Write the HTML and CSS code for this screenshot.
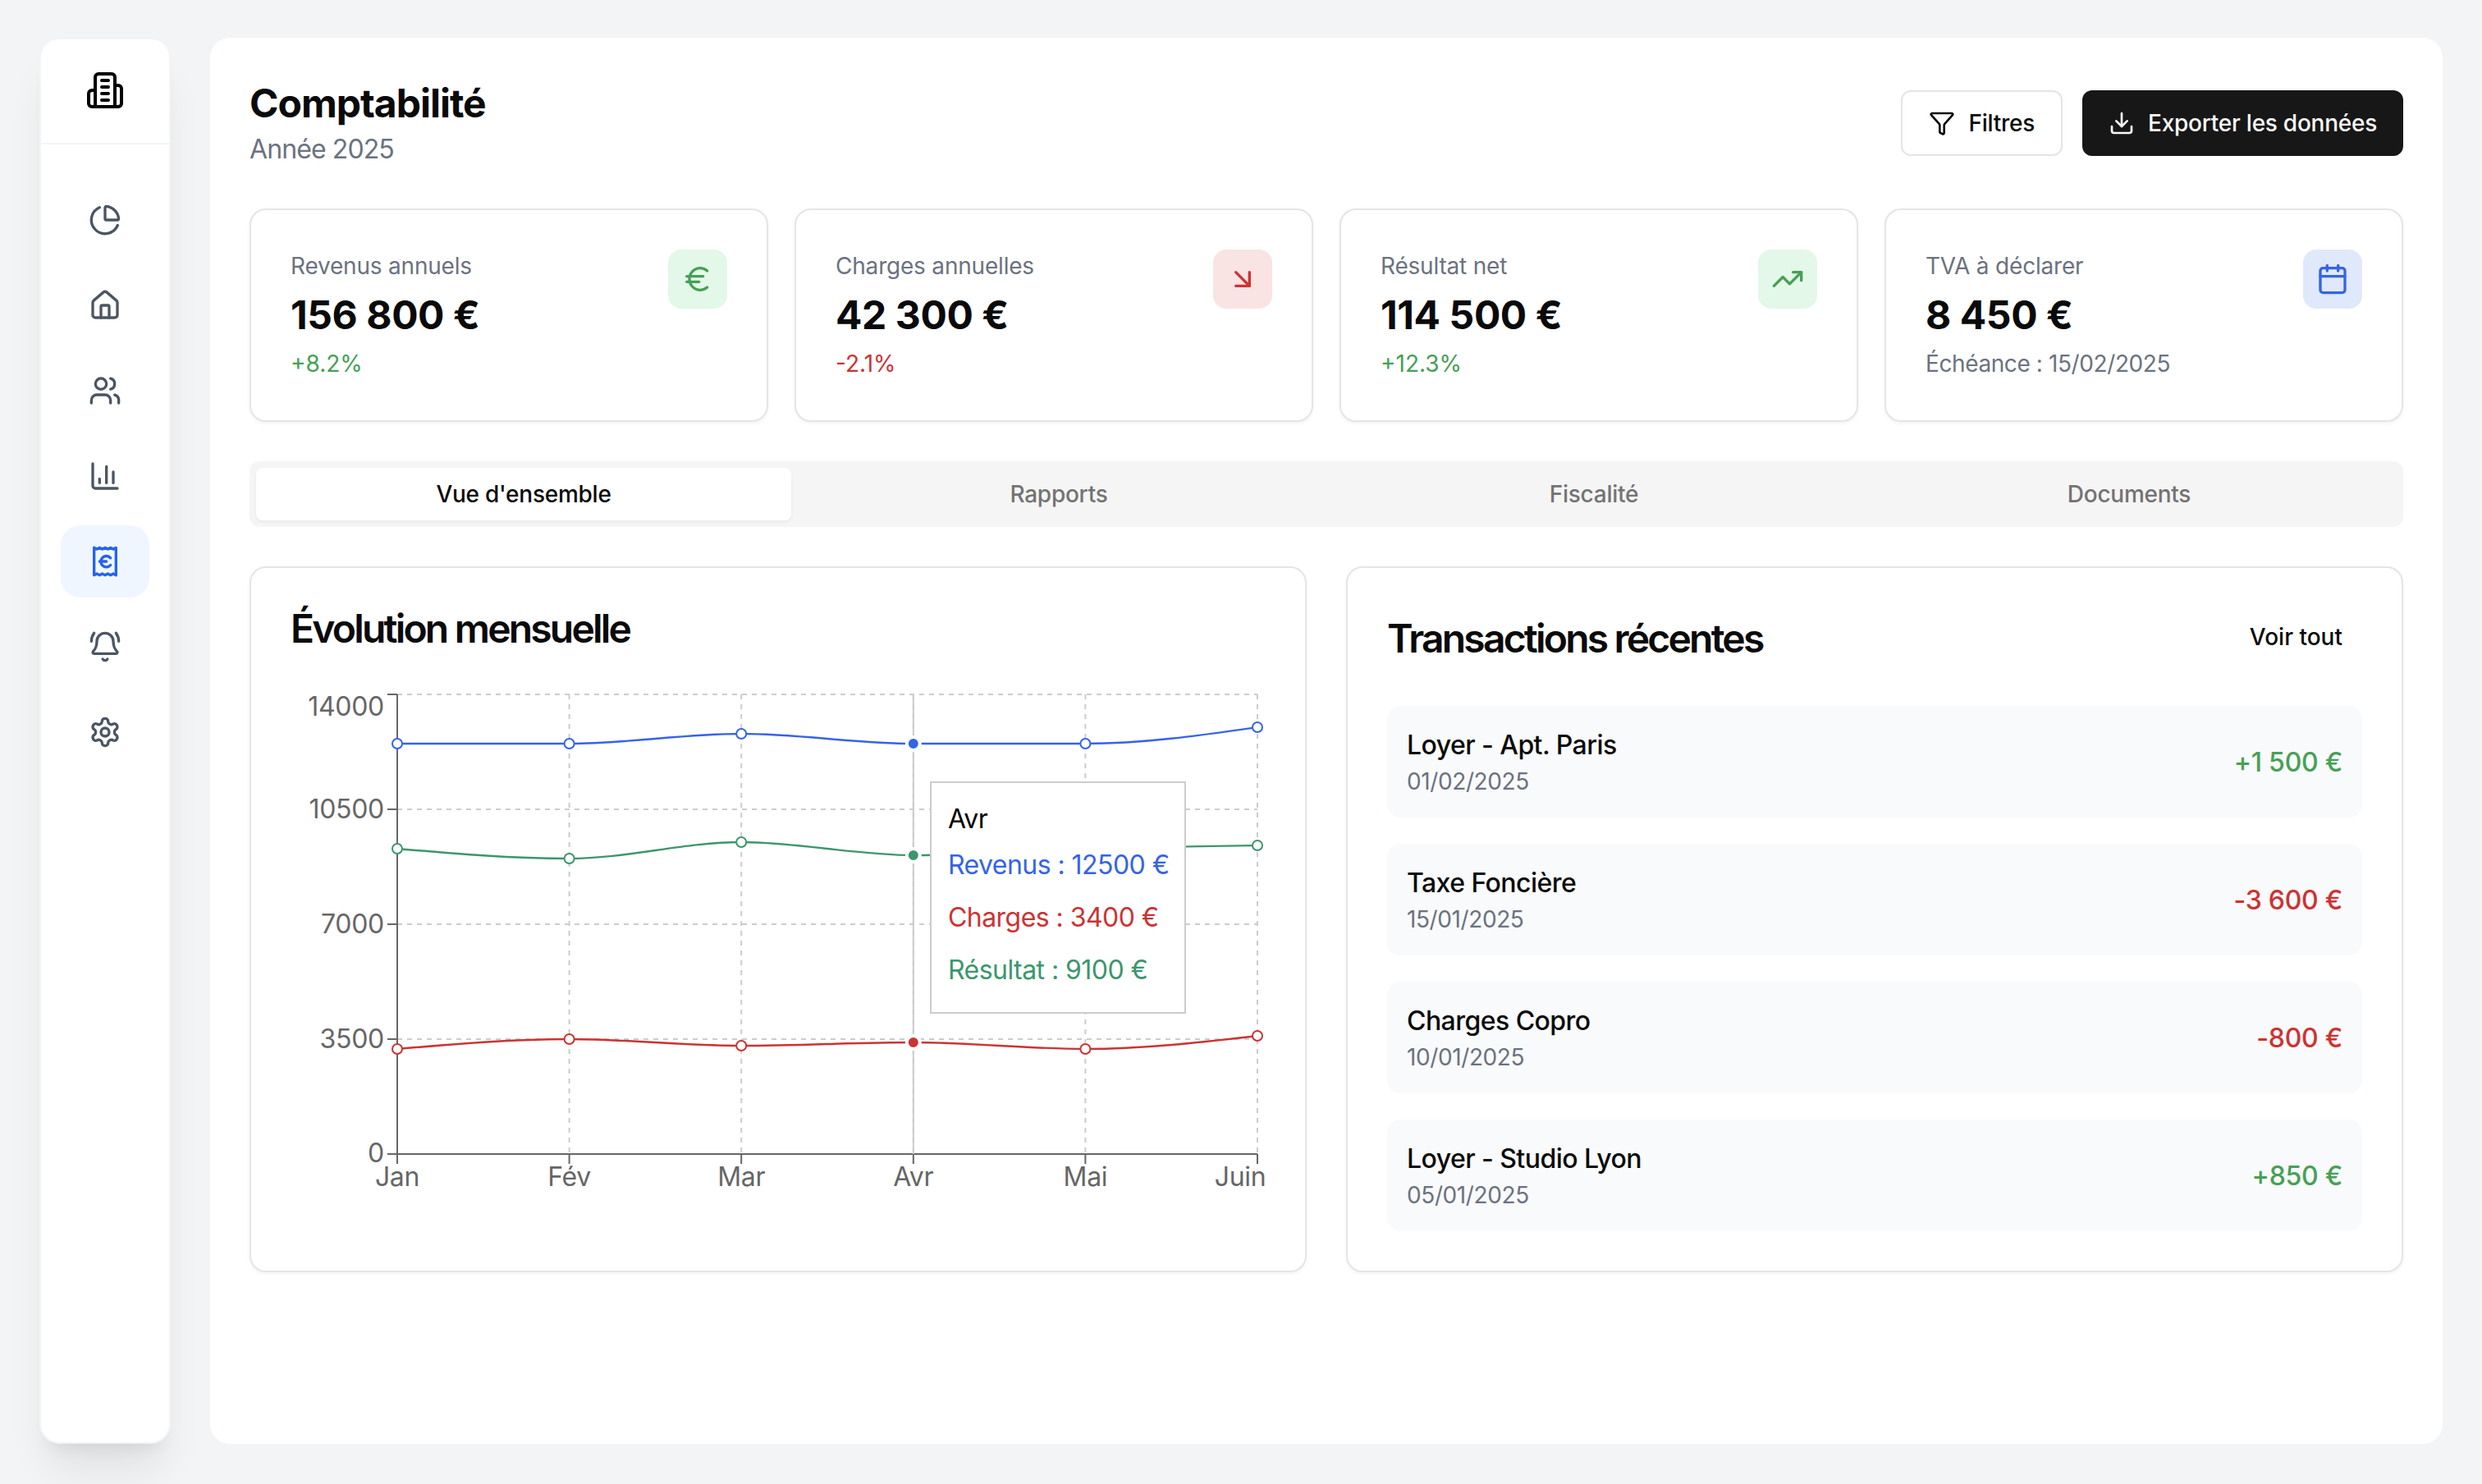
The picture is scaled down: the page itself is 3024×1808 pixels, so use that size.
FILE: index.html
```html
<!DOCTYPE html>
<html lang="fr">
<head>
    <meta charset="utf-8">
    <title>Comptabilité</title>
    <link rel="stylesheet" href="styles.css">
</head>
<body>
<div class="app">
    <!-- sidebar -->
    <aside class="sidebar">
        <div class="sidebar-logo">
            <svg class="icon logo-icon" viewBox="0 0 24 24"><path d="M6 22V4a2 2 0 0 1 2-2h8a2 2 0 0 1 2 2v18Z"/><path d="M6 12H4a2 2 0 0 0-2 2v6a2 2 0 0 0 2 2h2"/><path d="M18 9h2a2 2 0 0 1 2 2v9a2 2 0 0 1-2 2h-2"/><path d="M10 6h4"/><path d="M10 10h4"/><path d="M10 14h4"/><path d="M10 18h4"/></svg>
        </div>
        <nav class="sidebar-nav">
            <a class="nav-item"><svg class="icon" viewBox="0 0 24 24"><path d="M21 12c.552 0 1.005-.449.95-.998a10 10 0 0 0-8.953-8.951c-.55-.055-.998.398-.998.95v8a1 1 0 0 0 1 1z"/><path d="M21.21 15.89A10 10 0 1 1 8 2.83"/></svg></a>
            <a class="nav-item"><svg class="icon" viewBox="0 0 24 24"><path d="M15 21v-8a1 1 0 0 0-1-1h-4a1 1 0 0 0-1 1v8"/><path d="M3 10a2 2 0 0 1 .709-1.528l7-5.999a2 2 0 0 1 2.582 0l7 5.999A2 2 0 0 1 21 10v9a2 2 0 0 1-2 2H5a2 2 0 0 1-2-2z"/></svg></a>
            <a class="nav-item"><svg class="icon" viewBox="0 0 24 24"><path d="M16 21v-2a4 4 0 0 0-4-4H6a4 4 0 0 0-4 4v2"/><circle cx="9" cy="7" r="4"/><path d="M22 21v-2a4 4 0 0 0-3-3.87"/><path d="M16 3.13a4 4 0 0 1 0 7.75"/></svg></a>
            <a class="nav-item"><svg class="icon" viewBox="0 0 24 24"><path d="M3 3v16a2 2 0 0 0 2 2h16"/><path d="M18 17V9"/><path d="M13 17V5"/><path d="M8 17v-3"/></svg></a>
            <a class="nav-item active"><svg class="icon" viewBox="0 0 24 24"><path d="M4 2v20l2-1 2 1 2-1 2 1 2-1 2 1 2-1 2 1V2l-2 1-2-1-2 1-2-1-2 1-2-1-2 1Z"/><path d="M8 12h5"/><path d="M16 9.5a4 4 0 1 0 0 5.2"/></svg></a>
            <a class="nav-item"><svg class="icon" viewBox="0 0 24 24"><path d="M10.268 21a2 2 0 0 0 3.464 0"/><path d="M22 8c0-2.3-.8-4.3-2-6"/><path d="M3.262 15.326A1 1 0 0 0 4 17h16a1 1 0 0 0 .74-1.673C19.41 13.956 18 12.499 18 8A6 6 0 0 0 6 8c0 4.499-1.411 5.956-2.738 7.326"/><path d="M4 2C2.8 3.7 2 5.7 2 8"/></svg></a>
            <a class="nav-item"><svg class="icon" viewBox="0 0 24 24"><path d="M12.22 2h-.44a2 2 0 0 0-2 2v.18a2 2 0 0 1-1 1.73l-.43.25a2 2 0 0 1-2 0l-.15-.08a2 2 0 0 0-2.73.73l-.22.38a2 2 0 0 0 .73 2.73l.15.1a2 2 0 0 1 1 1.72v.51a2 2 0 0 1-1 1.74l-.15.09a2 2 0 0 0-.73 2.73l.22.38a2 2 0 0 0 2.73.73l.15-.08a2 2 0 0 1 2 0l.43.25a2 2 0 0 1 1 1.73V20a2 2 0 0 0 2 2h.44a2 2 0 0 0 2-2v-.18a2 2 0 0 1 1-1.73l.43-.25a2 2 0 0 1 2 0l.15.08a2 2 0 0 0 2.73-.73l.22-.39a2 2 0 0 0-.73-2.73l-.15-.08a2 2 0 0 1-1-1.74v-.5a2 2 0 0 1 1-1.74l.15-.09a2 2 0 0 0 .73-2.73l-.22-.38a2 2 0 0 0-2.73-.73l-.15.08a2 2 0 0 1-2 0l-.43-.25a2 2 0 0 1-1-1.73V4a2 2 0 0 0-2-2z"/><circle cx="12" cy="12" r="3"/></svg></a>
        </nav>
    </aside>

    <main class="main">
        <!-- page header -->
        <header class="page-header">
            <div>
                <h1 class="page-title">Comptabilité</h1>
                <p class="page-sub">Année 2025</p>
            </div>
            <div class="header-actions">
                <button class="btn btn-outline">
                    <svg class="icon btn-icon" viewBox="0 0 24 24"><path d="M10 20a1 1 0 0 0 .553.895l2 1A1 1 0 0 0 14 21v-7a2 2 0 0 1 .517-1.341L21.74 4.67A1 1 0 0 0 21 3H3a1 1 0 0 0-.742 1.67l7.225 7.989A2 2 0 0 1 10 14z"/></svg>
                    Filtres
                </button>
                <button class="btn btn-dark">
                    <svg class="icon btn-icon" viewBox="0 0 24 24"><path d="M12 15V3"/><path d="M21 15v4a2 2 0 0 1-2 2H5a2 2 0 0 1-2-2v-4"/><path d="m7 10 5 5 5-5"/></svg>
                    Exporter les données
                </button>
            </div>
        </header>

        <!-- stat cards -->
        <section class="stats">
            <div class="card stat-card">
                <div>
                    <p class="stat-label">Revenus annuels</p>
                    <p class="stat-value">156 800 €</p>
                    <p class="stat-note up">+8.2%</p>
                </div>
                <div class="stat-icon green"><svg class="icon" viewBox="0 0 24 24"><path d="M4 10h12"/><path d="M4 14h9"/><path d="M19 6a7.7 7.7 0 0 0-5.2-2A7.9 7.9 0 0 0 6 12c0 4.4 3.5 8 7.8 8 2 0 3.8-.8 5.2-2"/></svg></div>
            </div>
            <div class="card stat-card">
                <div>
                    <p class="stat-label">Charges annuelles</p>
                    <p class="stat-value">42 300 €</p>
                    <p class="stat-note down">-2.1%</p>
                </div>
                <div class="stat-icon red"><svg class="icon" viewBox="0 0 24 24"><path d="m7 7 10 10"/><path d="M17 7v10H7"/></svg></div>
            </div>
            <div class="card stat-card">
                <div>
                    <p class="stat-label">Résultat net</p>
                    <p class="stat-value">114 500 €</p>
                    <p class="stat-note up">+12.3%</p>
                </div>
                <div class="stat-icon green"><svg class="icon" viewBox="0 0 24 24"><path d="M16 7h6v6"/><path d="m22 7-8.5 8.5-5-5L2 17"/></svg></div>
            </div>
            <div class="card stat-card">
                <div>
                    <p class="stat-label">TVA à déclarer</p>
                    <p class="stat-value">8 450 €</p>
                    <p class="stat-note">Échéance : 15/02/2025</p>
                </div>
                <div class="stat-icon blue"><svg class="icon" viewBox="0 0 24 24"><path d="M8 2v4"/><path d="M16 2v4"/><rect width="18" height="18" x="3" y="4" rx="2"/><path d="M3 10h18"/></svg></div>
            </div>
        </section>

        <!-- tabs -->
        <div class="tabs">
            <div class="tab active">Vue d'ensemble</div>
            <div class="tab">Rapports</div>
            <div class="tab">Fiscalité</div>
            <div class="tab">Documents</div>
        </div>

        <section class="panels">
            <!-- chart -->
            <div class="card panel">
                <h2 class="panel-title chart-title">Évolution mensuelle</h2>
                <div class="chart">
                    <svg class="chart-svg" viewBox="354 836 1188 664" width="1188" height="664">
                        <g class="grid">
                            <path d="M484 846H1532M484 986H1532M484 1126H1532M484 1266H1532M484 1406H1532"/>
                            <path d="M484 846V1406M693.6 846V1406M903.2 846V1406M1112.8 846V1406M1322.4 846V1406M1532 846V1406"/>
                        </g>
                        <g class="axis">
                            <path d="M484 846V1406M472 846H484M472 986H484M472 1126H484M472 1266H484M472 1406H484"/>
                            <path d="M484 1406H1532M484 1406V1418M693.6 1406V1418M903.2 1406V1418M1112.8 1406V1418M1322.4 1406V1418M1532 1406V1418"/>
                        </g>
                        <g class="tick-y">
                            <text x="468" y="872">14000</text>
                            <text x="468" y="997">10500</text>
                            <text x="468" y="1137">7000</text>
                            <text x="468" y="1277">3500</text>
                            <text x="468" y="1416">0</text>
                        </g>
                        <g class="tick-x">
                            <text x="484" y="1445">Jan</text>
                            <text x="693.6" y="1445">Fév</text>
                            <text x="903.2" y="1445">Mar</text>
                            <text x="1112.8" y="1445">Avr</text>
                            <text x="1322.4" y="1445">Mai</text>
                            <text x="1511" y="1445">Juin</text>
                        </g>
                        <path class="cursor" d="M1112.8 846V1406"/>

                        <path class="line line-blue" d="M484 906C553.87 906 623.73 906 693.6 906C763.47 906 833.33 894 903.2 894C973.07 894 1042.93 906 1112.8 906C1182.67 906 1252.53 906 1322.4 906C1392.27 906 1462.13 896 1532 886"/>
                        <path class="line line-red" d="M484 1278C553.87 1272 623.73 1266 693.6 1266C763.47 1266 833.33 1274 903.2 1274C973.07 1274 1042.93 1270 1112.8 1270C1182.67 1270 1252.53 1278 1322.4 1278C1392.27 1278 1462.13 1270 1532 1262"/>
                        <path class="line line-green" d="M484 1034C553.87 1040 623.73 1046 693.6 1046C763.47 1046 833.33 1026 903.2 1026C973.07 1026 1042.93 1042 1112.8 1042C1182.67 1042 1252.53 1036 1322.4 1034C1392.27 1032 1462.13 1031 1532 1030"/>

                        <g class="dots dots-blue">
                            <circle cx="484" cy="906" r="6"/><circle cx="693.6" cy="906" r="6"/><circle cx="903.2" cy="894" r="6"/><circle cx="1322.4" cy="906" r="6"/><circle cx="1532" cy="886" r="6"/>
                        </g>
                        <g class="dots dots-red">
                            <circle cx="484" cy="1278" r="6"/><circle cx="693.6" cy="1266" r="6"/><circle cx="903.2" cy="1274" r="6"/><circle cx="1322.4" cy="1278" r="6"/><circle cx="1532" cy="1262" r="6"/>
                        </g>
                        <g class="dots dots-green">
                            <circle cx="484" cy="1034" r="6"/><circle cx="693.6" cy="1046" r="6"/><circle cx="903.2" cy="1026" r="6"/><circle cx="1322.4" cy="1034" r="6"/><circle cx="1532" cy="1030" r="6"/>
                        </g>
                        <circle class="dot-active fill-blue" cx="1112.8" cy="906" r="8"/>
                        <circle class="dot-active fill-red" cx="1112.8" cy="1270" r="8"/>
                        <circle class="dot-active fill-green" cx="1112.8" cy="1042" r="8"/>
                    </svg>
                    <!-- tooltip for hovered month -->
                    <div class="chart-tooltip">
                        <p class="tooltip-label">Avr</p>
                        <p class="tooltip-row txt-blue">Revenus : 12500 €</p>
                        <p class="tooltip-row txt-red">Charges : 3400 €</p>
                        <p class="tooltip-row txt-green">Résultat : 9100 €</p>
                    </div>
                </div>
            </div>

            <!-- transactions -->
            <div class="card panel">
                <div class="panel-header">
                    <h2 class="panel-title">Transactions récentes</h2>
                    <a class="link-btn">Voir tout</a>
                </div>
                <div class="tx-list">
                    <div class="tx-row">
                        <div>
                            <p class="tx-name">Loyer - Apt. Paris</p>
                            <p class="tx-date">01/02/2025</p>
                        </div>
                        <span class="tx-amount up">+1 500 €</span>
                    </div>
                    <div class="tx-row">
                        <div>
                            <p class="tx-name">Taxe Foncière</p>
                            <p class="tx-date">15/01/2025</p>
                        </div>
                        <span class="tx-amount down">-3 600 €</span>
                    </div>
                    <div class="tx-row">
                        <div>
                            <p class="tx-name">Charges Copro</p>
                            <p class="tx-date">10/01/2025</p>
                        </div>
                        <span class="tx-amount down">-800 €</span>
                    </div>
                    <div class="tx-row">
                        <div>
                            <p class="tx-name">Loyer - Studio Lyon</p>
                            <p class="tx-date">05/01/2025</p>
                        </div>
                        <span class="tx-amount up">+850 €</span>
                    </div>
                </div>
            </div>
        </section>
    </main>
</div>
</body>
</html>
```

FILE: styles.css
```css
* {
    box-sizing: border-box;
}

body {
    margin: 0;
    background-color: #f3f4f6;
    color: #0a0a0a;
    font-family: Inter, "Liberation Sans", sans-serif;
}

p, h1, h2 {
    margin: 0;
}

.app {
    display: flex;
    gap: 48px;
    height: 1808px;
    padding: 46px 48px 49px;
}

.icon {
    fill: none;
    stroke: currentColor;
    stroke-width: 2;
    stroke-linecap: round;
    stroke-linejoin: round;
    width: 40px;
    height: 40px;
    display: block;
    flex-shrink: 0;
}

/* Sidebar */
.sidebar {
    width: 160px;
    flex-shrink: 0;
    background-color: #fff;
    border: 2px solid #f3f4f6;
    border-radius: 24px;
    box-shadow: 0 40px 50px -10px rgba(0, 0, 0, 0.08), 0 16px 20px -12px rgba(0, 0, 0, 0.08);
}

.sidebar-logo {
    display: flex;
    justify-content: center;
    padding: 38px 0 40px;
    border-bottom: 2px solid #f3f4f6;
}

.logo-icon {
    width: 48px;
    height: 48px;
    color: #000;
}

.sidebar-nav {
    display: flex;
    flex-direction: column;
    align-items: center;
    gap: 16px;
    padding-top: 48px;
}

.nav-item {
    width: 108px;
    height: 88px;
    display: flex;
    align-items: center;
    justify-content: center;
    border-radius: 24px;
    color: #4b5563;
}

.nav-item.active {
    background-color: #eff6ff;
    color: #2563eb;
}

/* Main area */
.main {
    flex: 1;
    padding: 48px;
    background-color: #fff;
    border-radius: 24px;
}

.page-header {
    display: flex;
    justify-content: space-between;
    align-items: center;
    margin-bottom: 48px;
}

.page-title {
    font-size: 48px;
    line-height: 64px;
    font-weight: 700;
    letter-spacing: -1px;
}

.page-sub {
    font-size: 32px;
    line-height: 48px;
    letter-spacing: -0.9px;
    color: #6b7280;
}

.header-actions {
    display: flex;
    gap: 24px;
}

.btn {
    display: flex;
    align-items: center;
    gap: 16px;
    height: 80px;
    padding: 0 32px;
    border-radius: 12px;
    font-family: inherit;
    font-size: 28px;
    font-weight: 500;
    letter-spacing: -0.25px;
}

.btn-icon {
    width: 32px;
    height: 32px;
}

.btn-outline {
    background-color: #fff;
    border: 2px solid #e5e5e5;
    color: #0a0a0a;
}

.btn-dark {
    background-color: #171717;
    border: 0;
    color: #fafafa;
}

/* Cards */
.card {
    background-color: #fff;
    border: 2px solid #e5e5e5;
    border-radius: 20px;
    box-shadow: 0 2px 4px rgba(0, 0, 0, 0.05);
}

.stats {
    display: grid;
    grid-template-columns: repeat(4, 1fr);
    gap: 32px;
    margin-bottom: 48px;
}

.stat-card {
    display: flex;
    justify-content: space-between;
    align-items: flex-start;
    min-height: 260px;
    padding: 48px;
}

.stat-label {
    font-size: 28px;
    line-height: 40px;
    letter-spacing: -0.2px;
    color: #6b7280;
}

.stat-value {
    margin-top: 8px;
    font-size: 48px;
    line-height: 64px;
    font-weight: 700;
    letter-spacing: -0.4px;
}

.stat-note {
    margin-top: 7px;
    font-size: 28px;
    line-height: 40px;
    letter-spacing: -0.4px;
    color: #6b7280;
}

.stat-note.up,
.stat-note.down {
    letter-spacing: 0;
}

.up {
    color: #46a055;
}

.down {
    color: #cc3333;
}

.stat-icon {
    width: 72px;
    height: 72px;
    border-radius: 16px;
    display: flex;
    align-items: center;
    justify-content: center;
}

.stat-icon.green {
    background-color: #e3f8e8;
    color: #46a055;
}

.stat-icon.red {
    background-color: #f9e3e3;
    color: #cc3333;
}

.stat-icon.blue {
    background-color: #dfe9fb;
    color: #3563e9;
}

/* Tabs */
.tabs {
    display: grid;
    grid-template-columns: repeat(4, 1fr);
    height: 80px;
    padding: 8px;
    margin-bottom: 48px;
    background-color: #f5f5f5;
    border-radius: 12px;
}

.tab {
    display: flex;
    align-items: center;
    justify-content: center;
    border-radius: 8px;
    font-size: 28px;
    font-weight: 500;
    letter-spacing: -0.25px;
    color: #737373;
}

.tab.active {
    background-color: #fff;
    color: #0a0a0a;
    box-shadow: 0 2px 4px rgba(0, 0, 0, 0.05);
}

/* Panels */
.panels {
    display: grid;
    grid-template-columns: repeat(2, 1fr);
    gap: 48px;
}

.panel {
    padding: 48px;
}

.panel-title {
    font-size: 48px;
    line-height: 48px;
    font-weight: 600;
    letter-spacing: -2.8px;
}

.chart-title {
    padding-top: 2px;
    margin-bottom: 46px;
}

.chart {
    position: relative;
    height: 664px;
}

.chart-svg {
    display: block;
    overflow: visible;
}

.grid path {
    fill: none;
    stroke: #ccc;
    stroke-width: 2;
    stroke-dasharray: 6 6;
}

.axis path {
    fill: none;
    stroke: #666;
    stroke-width: 2;
}

.tick-y text,
.tick-x text {
    fill: #666;
    font-size: 32px;
    letter-spacing: -0.3px;
}

.tick-y text {
    text-anchor: end;
}

.tick-x text {
    text-anchor: middle;
}

.cursor {
    fill: none;
    stroke: #ccc;
    stroke-width: 2;
}

.line {
    fill: none;
    stroke-width: 2.4;
}

.line-blue {
    stroke: #3563e9;
}

.line-red {
    stroke: #cc3333;
}

.line-green {
    stroke: #3c966e;
}

.dots circle {
    fill: #fff;
    stroke-width: 2;
}

.dots-blue circle {
    stroke: #3563e9;
}

.dots-red circle {
    stroke: #cc3333;
}

.dots-green circle {
    stroke: #3c966e;
}

.dot-active {
    stroke: #fff;
    stroke-width: 4;
}

.fill-blue {
    fill: #3563e9;
}

.fill-red {
    fill: #cc3333;
}

.fill-green {
    fill: #3c966e;
}

.chart-tooltip {
    position: absolute;
    left: 779px;
    top: 116px;
    width: 312px;
    height: 283px;
    padding: 20px;
    background-color: #fff;
    border: 2px solid #ccc;
    font-size: 32px;
    letter-spacing: -0.55px;
    white-space: nowrap;
}

.tooltip-label {
    line-height: 48px;
    color: #000;
}

.tooltip-row {
    line-height: 48px;
    padding: 8px 0;
}

.txt-blue {
    color: #3563e9;
}

.txt-red {
    color: #cc3333;
}

.txt-green {
    color: #3c966e;
}

/* Transactions */
.panel-header {
    display: flex;
    justify-content: space-between;
    align-items: center;
    height: 72px;
    margin-bottom: 48px;
}

.panel-header .panel-title {
    padding-top: 4px;
}

.link-btn {
    display: block;
    padding: 0 24px;
    font-size: 28px;
    font-weight: 500;
}

.tx-list {
    display: flex;
    flex-direction: column;
    gap: 32px;
}

.tx-row {
    display: flex;
    justify-content: space-between;
    align-items: center;
    padding: 24px;
    background-color: #f9fafb;
    border-radius: 16px;
}

.tx-name {
    font-size: 32px;
    line-height: 48px;
    font-weight: 500;
    letter-spacing: -0.55px;
}

.tx-date {
    font-size: 28px;
    line-height: 40px;
    letter-spacing: -0.4px;
    color: #6b7280;
}

.tx-amount {
    font-size: 32px;
    font-weight: 500;
    letter-spacing: -0.25px;
}
```
